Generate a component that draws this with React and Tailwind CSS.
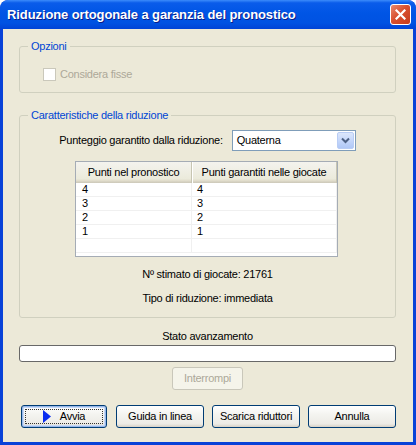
import React from "react";

const XpButton = ({ children, className = "", isDefault = false, disabled = false }) => (
  <button
    disabled={disabled}
    className={`h-[23px] rounded-[3px] border text-[11px] leading-none flex items-center justify-center ${
      disabled
        ? "border-[#C9C7BA] bg-[#F5F4EA] text-[#ACA899]"
        : "border-[#003C74] bg-[linear-gradient(to_bottom,#FFFFFF_0%,#F4F4F0_40%,#ECEBE6_85%,#D6D0C5_100%)] text-black"
    } ${isDefault ? "shadow-[inset_0_0_0_1px_#98B8EA,inset_0_0_0_2px_#C6D9F7]" : ""} ${className}`}
  >
    {children}
  </button>
);

const rows = [
  ["4", "4"],
  ["3", "3"],
  ["2", "2"],
  ["1", "1"],
  ["", ""],
];

export default function App() {
  return (
    <div
      className="w-[416px] h-[445px] bg-[#0842D8] rounded-t-[8px] flex flex-col overflow-hidden"
      style={{ fontFamily: '"Liberation Sans", Arial, sans-serif' }}
    >
      {/* Title bar */}
      <div className="h-[29px] shrink-0 rounded-t-[8px] bg-[linear-gradient(to_bottom,#3C8CFB_0%,#0A5CEA_10%,#0055E5_45%,#0052E2_80%,#0043D6_100%)] flex items-center pl-[7px] pr-[5px]">
        <span
          className="text-white text-[13px] font-bold tracking-[-0.1px] flex-1 pt-[1px]"
          style={{ fontFamily: '"Liberation Sans", Arial, sans-serif', textShadow: "1px 1px 0 #0A1E8A" }}
        >
          Riduzione ortogonale a garanzia del pronostico
        </span>
        <div className="w-[21px] h-[21px] rounded-[3px] border border-white bg-[linear-gradient(135deg,#E98A6E_0%,#D9502F_45%,#C43A1C_100%)] flex items-center justify-center">
          <svg width="11" height="11" viewBox="0 0 11 11">
            <path d="M1.5 1.5 L9.5 9.5 M9.5 1.5 L1.5 9.5" stroke="white" strokeWidth="2.2" strokeLinecap="square" />
          </svg>
        </div>
      </div>

      {/* Client */}
      <div className="mx-[3px] mb-[3px] flex-1 bg-[#ECE9D8] flex flex-col px-[16px] pr-[17px] text-[11px] tracking-[-0.25px] text-black">
        {/* Opzioni */}
        <fieldset className="mt-[11px] h-[53px] border border-[#D0D0BF] rounded-[3px] px-[8px]">
          <legend className="px-[3px] text-[#0046D5] leading-[13px]">Opzioni</legend>
          <div className="flex items-center gap-[4px] mt-[13px] ml-[15px]">
            <div className="w-[13px] h-[13px] border border-[#CAC8BB] bg-white" />
            <span className="text-[#ACA899]">Considera fisse</span>
          </div>
        </fieldset>

        {/* Caratteristiche */}
        <fieldset className="mt-[16px] h-[209px] border border-[#D0D0BF] rounded-[3px] px-[8px]">
          <legend className="px-[3px] text-[#0046D5] leading-[13px]">Caratteristiche della riduzione</legend>
          <div className="flex items-center justify-center gap-[9px] mt-[8px]">
            <span>Punteggio garantito dalla riduzione:</span>
            <div className="w-[124px] h-[21px] border border-[#7F9DB9] bg-white flex items-center">
              <span className="flex-1 pl-[4px]">Quaterna</span>
              <div className="w-[17px] h-[17px] mr-[1px] rounded-[2px] border border-[#B9CDF5] bg-[linear-gradient(to_bottom,#DCE7FC_0%,#C1D4FA_60%,#B0C8F7_100%)] flex items-center justify-center">
                <svg width="9" height="7" viewBox="0 0 9 7">
                  <path d="M1 1.5 L4.5 5 L8 1.5" stroke="#4D6185" strokeWidth="2" fill="none" />
                </svg>
              </div>
            </div>
          </div>

          {/* ListView */}
          <div className="mt-[10px] w-[263px] h-[96px] border border-[#A5ACB5] bg-white overflow-hidden ml-[47px]">
            <div className="flex h-[21px] bg-[linear-gradient(to_bottom,#F4F3EE_0%,#EBEADB_80%,#E2DECD_88%,#D6D2C2_94%,#CBC7B8_100%)]">
              <div className="w-[116px] flex items-center justify-center border-r border-[#C7C5B2] shadow-[1px_0_0_#FFFFFF]">
                Punti nel pronostico
              </div>
              <div className="w-[145px] flex items-center justify-center border-r border-[#C7C5B2]">
                Punti garantiti nelle giocate
              </div>
            </div>
            {rows.map((r, i) => (
              <div key={i} className="flex h-[14px] border-b border-[#F0F0F0]">
                <div className="w-[116px] border-r border-[#F0F0F0] pl-[6px] leading-[13px]">{r[0]}</div>
                <div className="w-[145px] border-r border-[#F0F0F0] pl-[5px] leading-[13px]">{r[1]}</div>
              </div>
            ))}
          </div>

          <div className="text-center mt-[11px] leading-[13px]">Nº stimato di giocate: 21761</div>
          <div className="text-center mt-[11px] leading-[13px]">Tipo di riduzione: immediata</div>
        </fieldset>

        <div className="text-center mt-[12px] leading-[13px]">Stato avanzamento</div>
        <div className="mt-[2px] h-[17px] rounded-[3px] border border-[#686868] bg-white" />
        <div className="flex justify-center mt-[5px]">
          <XpButton disabled className="w-[71px] h-[22px]">
            Interrompi
          </XpButton>
        </div>

        <div className="flex mt-[15px] ml-[2px]">
          <XpButton isDefault className="w-[86px] relative">
            <span className="absolute inset-[3px] border border-dotted border-[#333]" />
            <svg width="8" height="13" viewBox="0 0 8 13" className="mr-[9px]">
              <path d="M0 0 L8 6.5 L0 13 Z" fill="#0A2CF0" />
            </svg>
            Avvia
          </XpButton>
          <XpButton className="w-[88px] ml-[9px]">Guida in linea</XpButton>
          <XpButton className="w-[88px] ml-[8px]">Scarica riduttori</XpButton>
          <XpButton className="w-[88px] ml-[8px]">Annulla</XpButton>
        </div>
      </div>
    </div>
  );
}
